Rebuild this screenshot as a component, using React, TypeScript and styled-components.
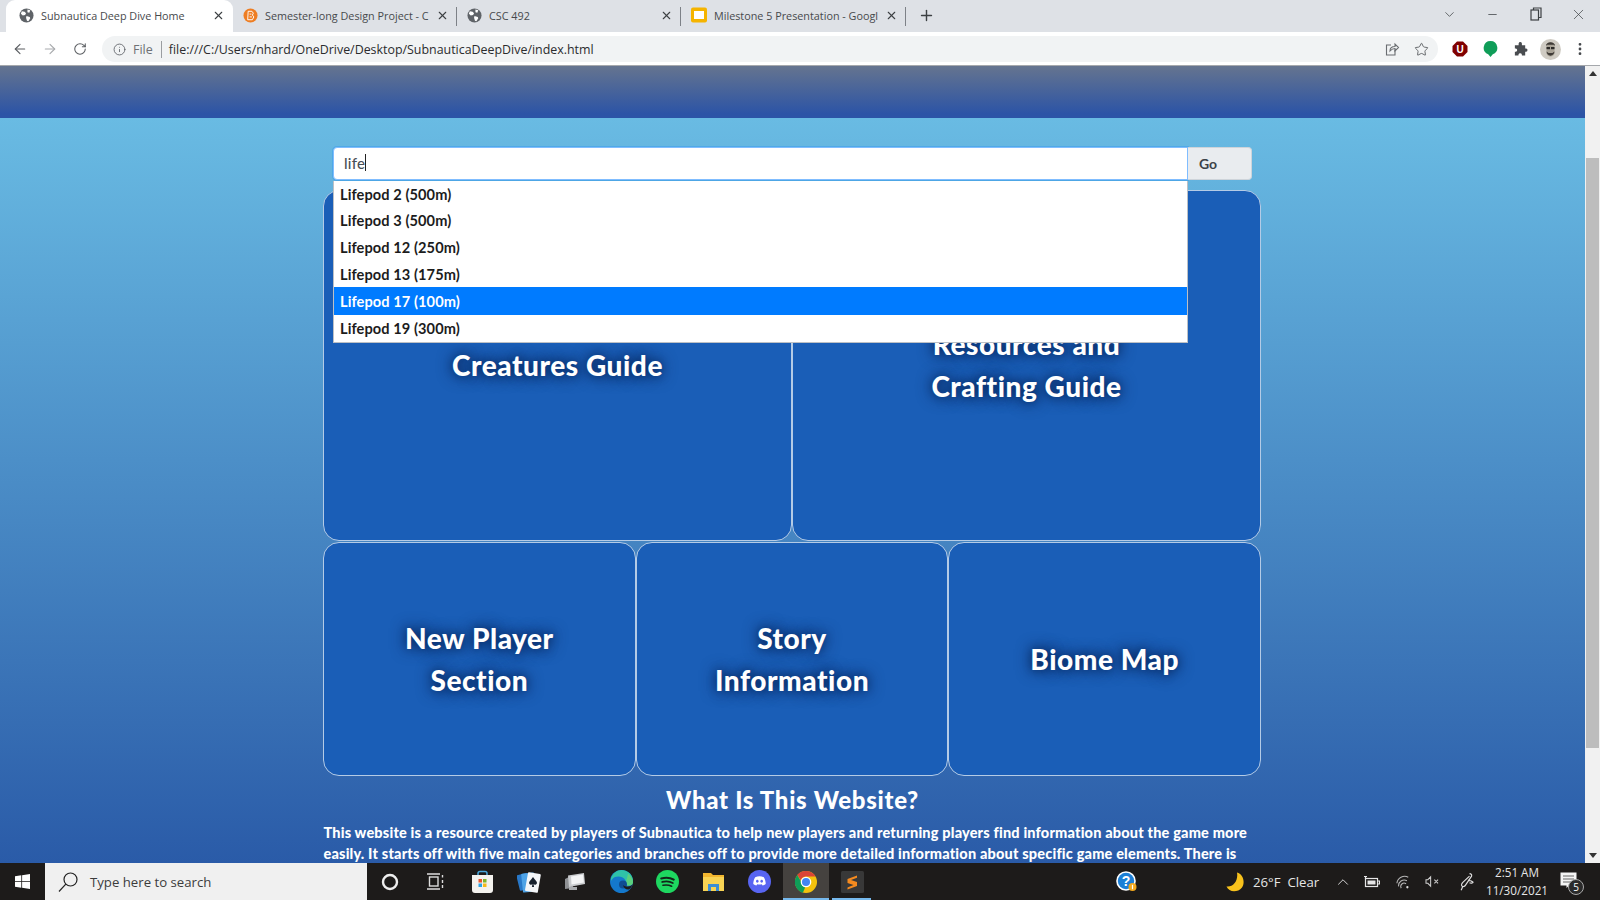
import React from "react";
import styled, { createGlobalStyle } from "styled-components";
import { ArrowLeft, ArrowRight, RotateCw, Info, Star, Minus, X, Plus, ChevronDown, ChevronUp, MoreVertical } from "lucide-react";

const Global = createGlobalStyle`
  html, body { margin: 0; padding: 0; height: 100%; overflow: hidden; background: #fff; }
  #root { height: 100%; }
  * { box-sizing: border-box; }
`;

const Screen = styled.div`
  width: 1600px; height: 900px; display: flex; flex-direction: column; overflow: hidden;
  font-family: "Open Sans", "Liberation Sans", sans-serif;
`;

/* ---------- browser chrome ---------- */
const TabStrip = styled.div`
  height: 32px; background: #dee1e6; display: flex; align-items: stretch; padding-left: 6px; flex: none;
`;
const Tab = styled.div<{ $w: number; $active?: boolean; $sep?: boolean }>`
  width: ${p => p.$w}px; display: flex; align-items: center; gap: 7px; padding: 0 8px 2px ${p => (p.$active ? 13 : 10)}px;
  background: ${p => (p.$active ? "#fff" : "transparent")};
  border-radius: ${p => (p.$active ? "9px 9px 0 0" : "0")};
  position: relative; flex: none;
  &::after {
    content: ""; display: ${p => (p.$sep ? "block" : "none")}; position: absolute; right: 0; top: 7px; bottom: 6px; width: 1px; background: #7d8187;
  }
`;
const TabTitle = styled.span`
  flex: 1; min-width: 0; white-space: nowrap; font-size: 10.8px; color: #47494c;
`;
const NewTab = styled.div`
  width: 40px; display: flex; align-items: center; justify-content: center; color: #3c4043; padding-bottom: 2px;
`;
const WindowControls = styled.div`
  margin-left: auto; display: flex; align-items: center; color: #3c4043; height: 28px; padding-right: 0;
`;
const WindowButton = styled.div<{ $w: number }>`
  width: ${p => p.$w}px; display: flex; align-items: center; justify-content: center;
`;
const Toolbar = styled.div`
  height: 34px; background: #fff; display: flex; align-items: center; padding: 1px 0 0 5px; flex: none; border-bottom: 1px solid #a5a8ac;
`;
const NavButton = styled.div<{ $dim?: boolean }>`
  width: 30px; display: flex; align-items: center; justify-content: center; color: ${p => (p.$dim ? "#a8aaad" : "#5a5d61")};
`;
const Omnibox = styled.div`
  width: 1336px; height: 26px; margin-left: 7px; border-radius: 13px; background: #f1f3f4; display: flex; align-items: center; padding-left: 11px; color: #5f6368;
`;
const SchemeLabel = styled.span`
  font-size: 12.5px; color: #6e7175; margin-left: 7px; padding-right: 8px; border-right: 1px solid #9a9da1; line-height: 17px;
`;
const UrlText = styled.span`
  font-size: 12.42px; color: #2b2c2e; margin-left: 7px;
`;
const OmniEnd = styled.div`
  margin-left: auto; display: flex; align-items: center; gap: 14px; padding-right: 9px; color: #55585c;
`;
const Extensions = styled.div`
  display: flex; align-items: center; margin-left: 7px;
`;
const ExtCell = styled.div<{ $w: number }>`
  width: ${p => p.$w}px; display: flex; align-items: center; justify-content: center;
`;

/* ---------- viewport ---------- */
const Viewport = styled.div`
  flex: 1; min-height: 0; display: flex;
`;
const Page = styled.div`
  flex: 1; min-width: 0; overflow: hidden; display: flex; flex-direction: column;
  background: linear-gradient(180deg, #69bbe3 52px, #2a5ba8 100%);
  font-family: "Lato", "Open Sans", sans-serif;
`;
const HeaderBand = styled.div`
  height: 52px; flex: none; background: linear-gradient(180deg, #65748f 0%, #2c54a6 92%);
`;
const SearchRow = styled.div`
  position: relative; width: 919px; height: 33px; margin: 29px auto 0; display: flex; flex: none;
`;
const SearchField = styled.div`
  width: 855px; height: 33px; background: #fff; border: 1px solid #80bdff; border-radius: 4px 0 0 4px;
  box-shadow: 0 0 0 1px rgba(0,123,255,.22); padding: 0 0 2px 10px; display: flex; align-items: center;
  font-size: 15px; font-weight: 500; color: #495057; letter-spacing: .2px;
`;
const Caret = styled.span`
  width: 1px; height: 17px; background: #222;
`;
const GoButton = styled.div`
  width: 64px; height: 33px; background: #e9ecef; border: 1px solid #ced4da; border-left: 0; border-radius: 0 4px 4px 0;
  font-size: 14px; font-weight: 700; color: #3c4248; display: flex; align-items: center; padding-left: 11px;
`;
const Dropdown = styled.ul`
  position: absolute; z-index: 5; left: 0; top: 34px; width: 855px; margin: 0; padding: 0; list-style: none;
  background: #fff; border: 1px solid #bcc0c5; border-top: 0;
`;
const Option = styled.li<{ $active?: boolean }>`
  height: ${p => (p.$active ? 28 : 26.6)}px; display: flex; align-items: center; padding: 0 0 0 6px;
  font-size: 14.6px; font-weight: 700; letter-spacing: .08px; white-space: nowrap;
  background: ${p => (p.$active ? "#007bff" : "#fff")}; color: ${p => (p.$active ? "#fff" : "#1c1c1c")};
`;
const CardGrid = styled.div`
  width: 938px; margin: 10px 0 0 323px; flex: none; display: flex; flex-direction: column; gap: 1px;
`;
const CardRow = styled.div<{ $h: number }>`
  height: ${p => p.$h}px; display: flex;
`;
const Card = styled.div`
  flex: 1 1 0; display: flex; align-items: center; justify-content: center; text-align: center;
  background: #1a5eb7; border: 1px solid #b4cbe6; border-radius: 16px; padding: 0 20px 1px;
  color: #fff; font-size: 28px; font-weight: 900; line-height: 42px; letter-spacing: .55px;
  text-shadow: 0 0 16px rgba(5,25,70,.9), 0 0 8px rgba(5,25,70,.55);
`;
const Intro = styled.section`
  width: 938px; margin: 0 auto; flex: none; color: #fff;
`;
const IntroTitle = styled.h2`
  margin: 8px 0 0; height: 31px; line-height: 31px; text-align: center; font-size: 24px; font-weight: 900; letter-spacing: .7px;
`;
const IntroLine = styled.p`
  margin: 0; height: 21px; line-height: 21px; font-size: 14.5px; font-weight: 900; white-space: nowrap; letter-spacing: .185px;
  &:first-of-type { margin-top: 7px; }
`;
const Scrollbar = styled.div`
  width: 15px; flex: none; background: #f1f1f1; display: flex; flex-direction: column;
`;
const ScrollArrow = styled.div`
  height: 15px; display: flex; align-items: center; justify-content: center; flex: none;
`;
const ScrollTrack = styled.div`
  flex: 1; padding: 77px 1px 100px;
`;
const ScrollThumb = styled.div`
  height: 100%; background: #bdbdbd;
`;

/* ---------- taskbar ---------- */
const Taskbar = styled.div`
  height: 37px; flex: none; background: #1d1b1a; display: flex; align-items: stretch; color: #e8e8e8;
`;
const StartButton = styled.div`
  width: 45px; display: flex; align-items: center; justify-content: center; flex: none;
`;
const SearchBox = styled.div`
  width: 322px; background: #f0f0f0; display: flex; align-items: center; padding-left: 12px; gap: 11px; flex: none; color: #222;
`;
const SearchHint = styled.span`
  font-size: 13.2px; color: #3c3c3c;
`;
const TaskIcons = styled.div`
  display: flex; flex: none;
`;
const TaskCell = styled.div<{ $active?: boolean; $run?: boolean }>`
  width: 46.2px; display: flex; align-items: center; justify-content: center; position: relative;
  background: ${p => (p.$active ? "#45423f" : "transparent")};
  &::after {
    content: ""; display: ${p => (p.$run ? "block" : "none")}; position: absolute; left: ${p => (p.$active ? 0 : 3)}px; right: ${p => (p.$active ? 0 : 4)}px; bottom: 0; height: 2px; background: #76b9ed;
  }
`;
const Tray = styled.div`
  margin-left: auto; display: flex; align-items: center; flex: none;
`;
const TrayCell = styled.div<{ $w: number; $ml?: number }>`
  width: ${p => p.$w}px; margin-left: ${p => p.$ml ?? 0}px; display: flex; align-items: center; justify-content: center; flex: none;
`;
const WeatherCell = styled.div`
  width: 107px; margin-left: 82px; display: flex; align-items: center; flex: none;
`;
const Weather = styled.span`
  font-size: 13.2px; color: #e6e6e6; margin-left: 8px; white-space: nowrap;
`;
const Clock = styled.div`
  width: 66px; text-align: center; font-size: 11.7px; line-height: 18px; color: #e6e6e6; flex: none; white-space: nowrap; padding-bottom: 1px;
`;
const NoteCell = styled.div`
  width: 50px; align-self: stretch; flex: none; position: relative; padding: 9px 0 0 10px;
`;
const Badge = styled.span`
  position: absolute; left: 18px; top: 16px; width: 16px; height: 16px; border-radius: 50%; background: #2a2a2a; border: 1px solid #aaa;
  font-size: 10px; line-height: 14px; text-align: center; color: #fff;
`;

/* ---------- drawings ---------- */
const GlobeIcon = () => (
  <svg width="15" height="15" viewBox="0 0 16 16" style={{ flex: "none" }}>
    <circle cx="8" cy="8" r="7.5" fill="#5f6368" />
    <path d="M3 3.5l3 .5 1.5 1.5-1 2-2.5.5-2-2zM9 1.5l3 1-1 2.5-2-.5zM8 8.5l3.5 1 .5 1.5-2 3-1.5-.5-1-3z" fill="#fff" />
  </svg>
);
const BloggerIcon = () => (
  <svg width="15" height="15" viewBox="0 0 16 16" style={{ flex: "none" }}>
    <circle cx="8" cy="8" r="7.5" fill="#ee7d22" />
    <path d="M5.5 3.5h4l1.5 2-1 2 1.5 2-1.5 3h-5z" fill="none" stroke="#fff" strokeWidth="1" />
    <path d="M7 6.5h2M7 9.5h2.5" stroke="#fff" strokeWidth="1" />
  </svg>
);
const SlidesIcon = () => (
  <svg width="16" height="16" viewBox="0 0 16 16" style={{ flex: "none" }}>
    <rect x="0" y="0.5" width="16" height="15" rx="2" fill="#f5b400" />
    <rect x="3" y="4" width="10" height="8" fill="#fff" />
  </svg>
);
const ShareIcon = () => (
  <svg width="16" height="16" viewBox="0 0 16 16" fill="none" stroke="#6a6d71" strokeWidth="1.1">
    <path d="M11 9v5H2.500V4H7" />
    <path d="M6 10c0-3 2-4.500 5-4.500V3l3.500 3.500L11 10V7.500c-2 0-3.500 .8-5 2.500z" />
  </svg>
);
const RestoreIcon = () => (
  <svg width="12" height="14" viewBox="0 0 12 14" fill="none" stroke="#3c4043" strokeWidth="1.2">
    <rect x="1" y="3" width="7.500" height="10" />
    <path d="M3.500 3V1H11v9.500H8.500" />
  </svg>
);
const UBlock = () => (
  <svg width="16" height="16" viewBox="0 0 16 16">
    <path d="M5 .5h6L15.500 5v6L11 15.500H5L.5 11V5z" fill="#800000" />
    <text x="8" y="12" textAnchor="middle" fontSize="10" fontWeight="700" fill="#fff" fontFamily="Liberation Sans">U</text>
  </svg>
);
const GreenDrop = () => (
  <svg width="15" height="18" viewBox="0 0 15 18">
    <path d="M7.500 1a6.800 6.800 0 0 1 2.300 13.200L7.500 17l-2.300-2.800A6.800 6.800 0 0 1 7.500 1z" fill="#0f9d58" />
  </svg>
);
const PuzzleIcon = () => (
  <svg width="15" height="15" viewBox="0 0 16 16">
    <path d="M6 1.500a1.800 1.800 0 0 1 3.500 0V3.500H13v3.300h1a1.900 1.900 0 0 1 0 3.700h-1v4H9.500v-1a1.900 1.900 0 0 0-3.700 0v1H2v-4h1a1.900 1.900 0 0 0 0-3.700H2V3.500h4z" fill="#494c50" />
  </svg>
);
const Avatar = () => (
  <svg width="21" height="21" viewBox="0 0 21 21">
    <circle cx="10.500" cy="10.500" r="10.500" fill="#cfcbc3" />
    <path d="M6.500 5.500c1-3 7-3 8 0v9c-1 4-7 4-8 0z" fill="#a8a296" />
    <rect x="6.500" y="8" width="3.500" height="2.200" fill="#2c2a28" />
    <rect x="11" y="8" width="3.500" height="2.200" fill="#2c2a28" />
    <path d="M6.500 12.500c.5 5.500 7.500 5.500 8 0l-2 1.500h-4z" fill="#3e3a36" />
    <path d="M6 7c0-5 9-5 9 0l-1.200-1.200H7.200z" fill="#3e3a36" />
  </svg>
);
const WinLogo = () => (
  <svg width="15" height="15" viewBox="0 0 15 15" fill="#fff">
    <path d="M0 2.200L6.300 1.300V7H0zM7.100 1.200L15 0V7H7.100zM0 7.800H6.300V13.700L0 12.800zM7.100 7.800H15V15L7.100 13.800z" />
  </svg>
);
const Magnifier = () => (
  <svg width="22" height="22" viewBox="0 0 22 22" fill="none" stroke="#222" strokeWidth="1.200">
    <circle cx="13.500" cy="8.500" r="6.500" />
    <path d="M8.800 13.200L2 20.500" />
  </svg>
);
const TaskView = () => (
  <svg width="18" height="17" viewBox="0 0 18 17" fill="none" stroke="#ddd" strokeWidth="1.400">
    <rect x="2.500" y="4" width="8.500" height="9" />
    <path d="M0 1h13M0 16h13M15.500 2v2.500M15.500 7v3M15.500 12v3" />
  </svg>
);
const StoreIcon = () => (
  <svg width="23" height="24" viewBox="0 0 23 24">
    <path d="M7 5V3.500Q7 1.500 9 1.500H14Q16 1.500 16 3.500V5" fill="none" stroke="#49a7dc" strokeWidth="1.500" />
    <path d="M1 5h21v15a3 3 0 0 1-3 3H4a3 3 0 0 1-3-3z" fill="#f4f2ee" />
    <rect x="7.500" y="9" width="3.500" height="3.500" fill="#e8542b" />
    <rect x="12" y="9" width="3.500" height="3.500" fill="#7db62b" />
    <rect x="7.500" y="13.500" width="3.500" height="3.500" fill="#2ba3e8" />
    <rect x="12" y="13.500" width="3.500" height="3.500" fill="#f6b91a" />
  </svg>
);
const SolitaireIcon = () => (
  <svg width="24" height="24" viewBox="0 0 24 24">
    <rect x="1" y="4" width="11" height="16" rx="1" fill="#2878c8" transform="rotate(-14 6 12)" />
    <rect x="5" y="3" width="13" height="19" rx="1" fill="#4ea3e6" transform="rotate(-6 12 12)" />
    <rect x="9.500" y="3" width="13" height="19" rx="1" fill="#f4f6f8" transform="rotate(10 16 12)" />
    <path d="M16 7c2 3 4 4 4 6a2 2 0 0 1-3.500 1l.6 3h-2.200l.6-3A2 2 0 0 1 12 13c0-2 2-3 4-6z" fill="#16202c" />
  </svg>
);
const PhotosIcon = () => (
  <svg width="22" height="20" viewBox="0 0 22 20">
    <path d="M1 7l8-4v13l-8 1z" fill="#8f9194" />
    <path d="M4 3.500L20 1l1 11-16 3z" fill="#c9cbce" />
    <path d="M7 4.500l12-2 .8 8-12.300 2z" fill="#f3f4f5" />
    <path d="M5 15h8v3H5z" fill="#a9abae" />
  </svg>
);
const EdgeIcon = () => (
  <svg width="23" height="23" viewBox="0 0 23 23">
    <circle cx="11.500" cy="11.500" r="11.500" fill="#1478cc" />
    <path d="M1 8C3 3 7 0 11.500 0 18 0 23 5 23 11c0 3-1 4-3 4.500H14c2-1 2.500-3 1.500-5C14 7 9 5.500 5 7 3 8 2 9 1 11z" fill="#2fc2a8" />
    <path d="M18 3.500C21 6 23 9 23 12c0 2-1 3.500-3 3.500H15c1.500-1 2-3 1.200-5 1-2.500 1.500-5 1.800-7z" fill="#5bd07e" />
    <circle cx="13" cy="14.500" r="4" fill="#0f4c92" />
    <path d="M23 13c-.5 2.500-3 3.500-5.500 3.500-2 0-3.500-.5-4.500-1.500.5 3 3 5 6 4.500 2-1.500 3.500-4 4-6.500z" fill="#1d1b1a" />
  </svg>
);
const SpotifyIcon = () => (
  <svg width="23" height="23" viewBox="0 0 24 24" fill="none">
    <circle cx="12" cy="12" r="12" fill="#1ed760" />
    <path d="M5.500 8.800c4.500-1.200 9.500-.8 13 1.200" stroke="#12261a" strokeWidth="2.200" strokeLinecap="round" />
    <path d="M6.500 12.500c3.800-1 8-.6 11 1.100" stroke="#12261a" strokeWidth="1.900" strokeLinecap="round" />
    <path d="M7.300 16c3-.7 6.300-.4 9 1" stroke="#12261a" strokeWidth="1.600" strokeLinecap="round" />
  </svg>
);
const FolderIcon = () => (
  <svg width="21" height="20" viewBox="0 0 21 20">
    <path d="M0 1h8l2 2h11v16H0z" fill="#f2b62f" />
    <rect x="0" y="5" width="21" height="14" fill="#f8d354" />
    <path d="M5 19v-7h11v7z" fill="#3b8ed6" />
    <rect x="8" y="15" width="5" height="4" fill="#f8d354" />
  </svg>
);
const DiscordIcon = () => (
  <svg width="23" height="23" viewBox="0 0 24 24">
    <circle cx="12" cy="12" r="12" fill="#5865f2" />
    <path d="M7.500 7.500c3-1.400 6-1.400 9 0 1.300 2 2 4.500 2 7-1 .9-2.200 1.500-3.300 1.700l-.8-1.300c-1.600.4-3.200.4-4.800 0l-.8 1.300C7.700 16 6.500 15.400 5.500 14.500c0-2.500.7-5 2-7z" fill="#fff" />
    <ellipse cx="9.700" cy="11.800" rx="1.300" ry="1.500" fill="#5865f2" />
    <ellipse cx="14.300" cy="11.800" rx="1.300" ry="1.500" fill="#5865f2" />
  </svg>
);
const ChromeIcon = () => (
  <svg width="22" height="22" viewBox="0 0 24 24">
    <circle cx="12" cy="12" r="12" fill="#f4c20d" />
    <path d="M12 0a12 12 0 0 1 10.400 6H12a6 6 0 0 0-5.700 4L2.500 4.400A12 12 0 0 1 12 0z" fill="#db4437" />
    <path d="M2.500 4.400l5 8.600a5 5 0 0 0 3.500 5l-2.400 5.600A12 12 0 0 1 2.500 4.400z" fill="#0f9d58" />
    <circle cx="12" cy="12" r="5.800" fill="#fff" />
    <circle cx="12" cy="12" r="4.400" fill="#4285f4" />
  </svg>
);
const SublimeIcon = () => (
  <svg width="23" height="22" viewBox="0 0 23 22" style={{ marginLeft: 2 }}>
    <rect x="0" y="0" width="23" height="22" rx="1.500" fill="#383838" />
    <path d="M16 4.500L6.500 8v4l6 2-6 2.500V18.500L16 15v-4L10 9l6-2.300z" fill="#f58a1f" />
  </svg>
);
const HelpIcon = () => (
  <svg width="22" height="22" viewBox="0 0 22 22">
    <circle cx="10" cy="10" r="9.800" fill="#fff" />
    <circle cx="10" cy="10" r="8.200" fill="#1c7fd6" />
    <text x="10" y="15" textAnchor="middle" fontSize="14" fontWeight="700" fill="#fff" fontFamily="Liberation Sans">?</text>
    <circle cx="16.500" cy="16" r="4" fill="#f2a81d" />
    <rect x="15.900" y="13.800" width="1.200" height="4.400" fill="#fff" />
  </svg>
);
const MoonIcon = () => (
  <svg width="19" height="20" viewBox="0 0 19 20" style={{ flex: "none" }}>
    <path d="M11 .5C17 2 19.500 10 16 15.500 11.500 21 3 20.500.5 14.500 7 15.500 12.500 9 11 .5z" fill="#f8c21c" />
  </svg>
);
const BatteryIcon = () => (
  <svg width="16" height="12" viewBox="0 0 16 12" fill="none" stroke="#e6e6e6" strokeWidth="1.200">
    <rect x="1.500" y="2.500" width="12" height="8" />
    <rect x="3.500" y="4.500" width="8" height="4" fill="#e6e6e6" stroke="none" />
    <path d="M13.500 5H15.500V8H13.500M0 .5h3M1.500 .5v2" />
  </svg>
);
const WifiIcon = () => (
  <svg width="14" height="14" viewBox="0 0 16 16" fill="none" stroke="#b8b8b8" strokeWidth="1.200">
    <path d="M1 9.500a9 9 0 0 1 13-7M3 13a6.500 6.500 0 0 1 9.500-6.500M6 15a3.800 3.800 0 0 1 5.500-5" />
    <circle cx="13" cy="14" r="1.300" fill="#ddd" stroke="none" />
  </svg>
);
const VolumeIcon = () => (
  <svg width="15" height="13" viewBox="0 0 16 14" fill="none" stroke="#cfcfcf" strokeWidth="1.100">
    <path d="M1 5h2l3-3v10L3 9H1zM10 5l4 4M14 5l-4 4" />
  </svg>
);
const PenIcon = () => (
  <svg width="18" height="20" viewBox="0 0 20 24" fill="none" stroke="#e0e0e0" strokeWidth="1.400">
    <path d="M13 2c2 0 3 1.500 2.500 3L8 16c-1 1.500-3 2-4 1s-.5-3 1-4.500L13 5M5 17l-2 5M11 10c2 0 4 0 6 2 1 1-2 2-4 1" />
  </svg>
);
const NoteIcon = () => (
  <svg width="17" height="16" viewBox="0 0 17 16" style={{ display: "block" }}>
    <path d="M.5.500h16v13H9l-2.500 2.500v-2.500H.5z" fill="#f4f4f4" />
    <path d="M3 4h11M3 7h11M3 10h11" stroke="#666" strokeWidth="1" />
  </svg>
);

const tabs = [
  { w: 227, title: "Subnautica Deep Dive Home", icon: <GlobeIcon />, active: true },
  { w: 224, title: "Semester-long Design Project - C", icon: <BloggerIcon />, sep: true },
  { w: 224, title: "CSC 492", icon: <GlobeIcon />, sep: true },
  { w: 225, title: "Milestone 5 Presentation - Googl", icon: <SlidesIcon />, sep: true },
];
const options = ["Lifepod 2 (500m)", "Lifepod 3 (500m)", "Lifepod 12 (250m)", "Lifepod 13 (175m)", "Lifepod 17 (100m)", "Lifepod 19 (300m)"];

export default function App() {
  return (
    <Screen>
      <Global />
      <TabStrip>
        {tabs.map(t => (
          <Tab key={t.title} $w={t.w} $active={t.active} $sep={t.sep}>
            {t.icon}
            <TabTitle>{t.title}</TabTitle>
            <X size={13} strokeWidth={2} color="#3c4043" />
          </Tab>
        ))}
        <NewTab><Plus size={17} strokeWidth={2} /></NewTab>
        <WindowControls>
          <WindowButton $w={43}><ChevronDown size={15} strokeWidth={1.2} /></WindowButton>
          <WindowButton $w={43}><Minus size={13} strokeWidth={1.4} /></WindowButton>
          <WindowButton $w={43}><RestoreIcon /></WindowButton>
          <WindowButton $w={43}><X size={17} strokeWidth={1} /></WindowButton>
        </WindowControls>
      </TabStrip>
      <Toolbar>
        <NavButton><ArrowLeft size={16} strokeWidth={1.7} /></NavButton>
        <NavButton $dim><ArrowRight size={16} strokeWidth={1.7} /></NavButton>
        <NavButton><RotateCw size={14} strokeWidth={1.8} /></NavButton>
        <Omnibox>
          <Info size={13} strokeWidth={1.6} />
          <SchemeLabel>File</SchemeLabel>
          <UrlText>file:///C:/Users/nhard/OneDrive/Desktop/SubnauticaDeepDive/index.html</UrlText>
          <OmniEnd>
            <ShareIcon />
            <Star size={15} strokeWidth={1.4} />
          </OmniEnd>
        </Omnibox>
        <Extensions>
          <ExtCell $w={30}><UBlock /></ExtCell>
          <ExtCell $w={30}><GreenDrop /></ExtCell>
          <ExtCell $w={30}><PuzzleIcon /></ExtCell>
          <ExtCell $w={30}><Avatar /></ExtCell>
          <ExtCell $w={29}><MoreVertical size={16} strokeWidth={2.2} color="#44474b" /></ExtCell>
        </Extensions>
      </Toolbar>
      <Viewport>
        <Page>
          <HeaderBand />
          <SearchRow>
            <SearchField>life<Caret /></SearchField>
            <GoButton>Go</GoButton>
            <Dropdown>
              {options.map(o => (
                <Option key={o} $active={o === "Lifepod 17 (100m)"}>{o}</Option>
              ))}
            </Dropdown>
          </SearchRow>
          <CardGrid>
            <CardRow $h={351}>
              <Card>Creatures Guide</Card>
              <Card>Resources and<br />Crafting Guide</Card>
            </CardRow>
            <CardRow $h={234}>
              <Card>New Player<br />Section</Card>
              <Card>Story<br />Information</Card>
              <Card>Biome Map</Card>
            </CardRow>
          </CardGrid>
          <Intro>
            <IntroTitle>What Is This Website?</IntroTitle>
            <IntroLine>This website is a resource created by players of Subnautica to help new players and returning players find information about the game more</IntroLine>
            <IntroLine>easily. It starts off with five main categories and branches off to provide more detailed information about specific game elements. There is</IntroLine>
          </Intro>
        </Page>
        <Scrollbar>
          <ScrollArrow><svg width="8" height="5" viewBox="0 0 8 5"><path d="M4 0l4 5H0z" fill="#333" /></svg></ScrollArrow>
          <ScrollTrack><ScrollThumb /></ScrollTrack>
          <ScrollArrow><svg width="8" height="5" viewBox="0 0 8 5"><path d="M4 5L0 0h8z" fill="#333" /></svg></ScrollArrow>
        </Scrollbar>
      </Viewport>
      <Taskbar>
        <StartButton><WinLogo /></StartButton>
        <SearchBox>
          <Magnifier />
          <SearchHint>Type here to search</SearchHint>
        </SearchBox>
        <TaskIcons>
          <TaskCell><svg width="18" height="18" viewBox="0 0 18 18"><circle cx="9" cy="9" r="7" fill="none" stroke="#eee" strokeWidth="2.400" /></svg></TaskCell>
          <TaskCell><TaskView /></TaskCell>
          <TaskCell><StoreIcon /></TaskCell>
          <TaskCell><SolitaireIcon /></TaskCell>
          <TaskCell><PhotosIcon /></TaskCell>
          <TaskCell><EdgeIcon /></TaskCell>
          <TaskCell><SpotifyIcon /></TaskCell>
          <TaskCell><FolderIcon /></TaskCell>
          <TaskCell><DiscordIcon /></TaskCell>
          <TaskCell $active $run><ChromeIcon /></TaskCell>
          <TaskCell $run><SublimeIcon /></TaskCell>
        </TaskIcons>
        <Tray>
          <TrayCell $w={34}><HelpIcon /></TrayCell>
          <WeatherCell><MoonIcon /><Weather>26°F&nbsp; Clear</Weather></WeatherCell>
          <TrayCell $w={20}><ChevronUp size={18} strokeWidth={1.2} /></TrayCell>
          <TrayCell $w={38}><BatteryIcon /></TrayCell>
          <TrayCell $w={24}><WifiIcon /></TrayCell>
          <TrayCell $w={34}><VolumeIcon /></TrayCell>
          <TrayCell $w={35}><PenIcon /></TrayCell>
          <Clock>2:51 AM<br />11/30/2021</Clock>
          <NoteCell><NoteIcon /><Badge>5</Badge></NoteCell>
        </Tray>
      </Taskbar>
    </Screen>
  );
}
